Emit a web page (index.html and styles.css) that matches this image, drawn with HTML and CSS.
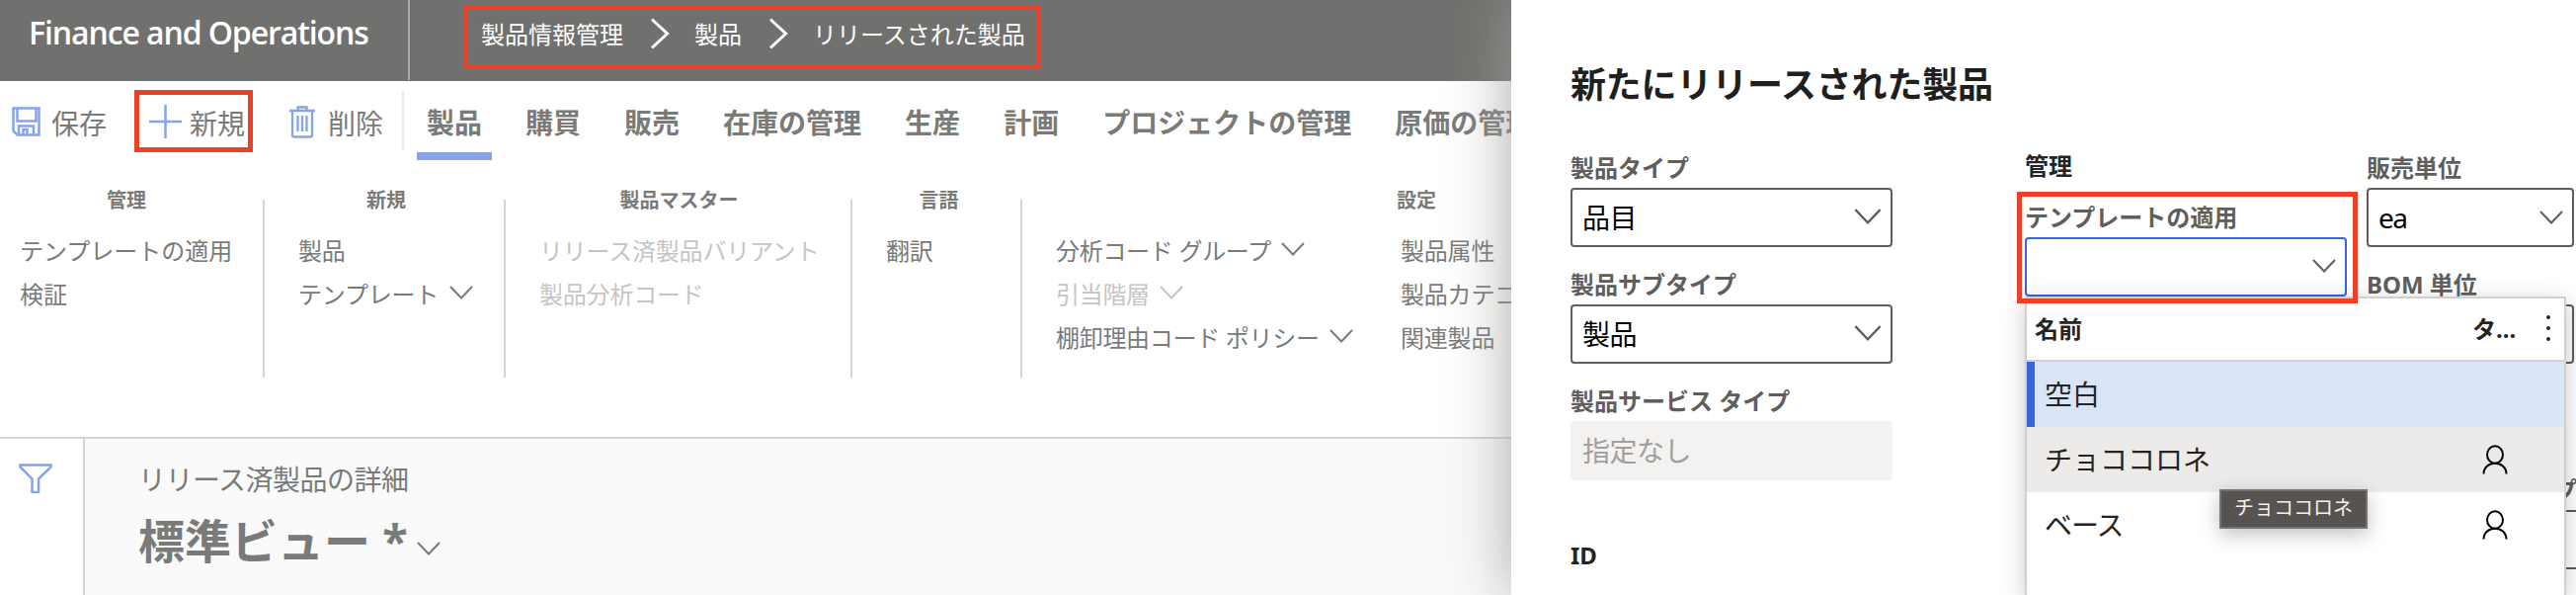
FILE: index.html
```html
<!DOCTYPE html>
<html lang="ja">
<head>
  <meta charset="UTF-8">
  <meta name="viewport" content="width=device-width, initial-scale=1.0">
  <title>Finance and Operations - リリースされた製品</title>
  <link rel="stylesheet" href="styles.css">
</head>
<body>
  <!-- 共通アイコン -->
  <svg class="sprite" aria-hidden="true">
    <symbol id="chevron-down" viewBox="0 0 24 14">
      <path d="M1 1l11 11.5L23 1" fill="none" stroke="currentColor" stroke-width="2"/>
    </symbol>
    <symbol id="chevron-right" viewBox="0 0 20 32">
      <path d="M2 1.5L17.5 16 2 30.500" fill="none" stroke="currentColor" stroke-width="3"/>
    </symbol>
    <symbol id="person" viewBox="0 0 26 30">
      <ellipse cx="13" cy="10" rx="8" ry="8.700" fill="none" stroke="currentColor" stroke-width="2"/>
      <path d="M1.500 29.500C1.500 23 6.500 18.700 13 18.700S24.500 23 24.500 29.500" fill="none" stroke="currentColor" stroke-width="2"/>
    </symbol>
  </svg>

  <main class="page">
    <header class="topbar">
      <div class="brand"><span class="brand-name">Finance and Operations</span></div>
      <nav class="breadcrumb marked">
        <span>製品情報管理</span>
        <svg class="crumb-arrow"><use href="#chevron-right"/></svg>
        <span>製品</span>
        <svg class="crumb-arrow"><use href="#chevron-right"/></svg>
        <span>リリースされた製品</span>
      </nav>
    </header>

    <div class="toolbar">
      <button class="tool save">
        <svg width="29" height="30" viewBox="0 0 29 30" fill="none" stroke="currentColor" stroke-width="2.500">
          <path d="M1.500 1.500h26v27h-22l-4-4z"/>
          <path d="M5.500 1.500v13h19v-13M7 28v-8.500h15V28M11.500 28v-5h4v5"/>
        </svg>
        <span>保存</span>
      </button>
      <button class="tool new marked">
        <svg width="33" height="34" viewBox="0 0 33 34" fill="none" stroke="currentColor" stroke-width="2.500">
          <path d="M16.500 0v34M0 17h33"/>
        </svg>
        <span>新規</span>
      </button>
      <button class="tool delete">
        <svg width="26" height="33" viewBox="0 0 26 33" fill="none" stroke="currentColor" stroke-width="2.300">
          <path d="M0 5h26M8.500 5V1.500h9V5M3 5v24.500q0 2 2 2h16q2 0 2-2V5M8.500 10v16M13 10v16M17.500 10v16"/>
        </svg>
        <span>削除</span>
      </button>
      <div class="tabs">
        <span class="tab active">製品</span>
        <span class="tab">購買</span>
        <span class="tab">販売</span>
        <span class="tab">在庫の管理</span>
        <span class="tab">生産</span>
        <span class="tab">計画</span>
        <span class="tab">プロジェクトの管理</span>
        <span class="tab">原価の管理</span>
      </div>
    </div>

    <div class="ribbon">
      <section class="group g-manage">
        <h3>管理</h3>
        <a>テンプレートの適用</a>
        <a>検証</a>
      </section>
      <section class="group g-new">
        <h3>新規</h3>
        <a>製品</a>
        <a>テンプレート<svg class="chev"><use href="#chevron-down"/></svg></a>
      </section>
      <section class="group g-master">
        <h3>製品マスター</h3>
        <a class="disabled">リリース済製品バリアント</a>
        <a class="disabled">製品分析コード</a>
      </section>
      <section class="group g-lang">
        <h3>言語</h3>
        <a>翻訳</a>
      </section>
      <section class="group g-setup">
        <h3>設定</h3>
        <div class="columns">
          <div class="column">
            <a>分析コード グループ<svg class="chev"><use href="#chevron-down"/></svg></a>
            <a class="disabled">引当階層<svg class="chev"><use href="#chevron-down"/></svg></a>
            <a>棚卸理由コード ポリシー<svg class="chev"><use href="#chevron-down"/></svg></a>
          </div>
          <div class="column">
            <a>製品属性</a>
            <a>製品カテゴリ</a>
            <a>関連製品</a>
          </div>
        </div>
      </section>
    </div>

    <div class="content">
      <aside class="rail">
        <svg width="34" height="30" viewBox="0 0 34 30" fill="none" stroke="currentColor" stroke-width="2.500">
          <path d="M1.500 1.500h31v2L20 15.500V29h-6.500V15.500L1.500 3.500z"/>
        </svg>
      </aside>
      <div class="record">
        <div class="record-caption">リリース済製品の詳細</div>
        <div class="record-view"><span>標準ビュー *</span><svg class="chev"><use href="#chevron-down"/></svg></div>
      </div>
    </div>
  </main>

  <aside class="panel">
    <h1>新たにリリースされた製品</h1>
    <div class="form">
      <div class="form-col col-type">
        <div class="field">
          <label>製品タイプ</label>
          <div class="input">品目<svg class="chev big"><use href="#chevron-down"/></svg></div>
        </div>
        <div class="field">
          <label>製品サブタイプ</label>
          <div class="input">製品<svg class="chev big"><use href="#chevron-down"/></svg></div>
        </div>
        <div class="field">
          <label>製品サービス タイプ</label>
          <div class="input readonly">指定なし</div>
        </div>
        <h2 class="id-title">ID</h2>
      </div>

      <div class="form-col col-manage">
        <h2>管理</h2>
        <div class="field template marked">
          <label>テンプレートの適用</label>
          <div class="input focused"><svg class="chev"><use href="#chevron-down"/></svg></div>
        </div>

        <div class="lookup">
          <div class="lookup-head">
            <span class="name">名前</span>
            <span class="type">タ...</span>
            <span class="more"><i></i><i></i><i></i></span>
          </div>
          <div class="lookup-row selected"><span>空白</span></div>
          <div class="lookup-row hover">
            <span>チョココロネ</span>
            <svg class="person"><use href="#person"/></svg>
            <div class="tooltip">チョココロネ</div>
          </div>
          <div class="lookup-row">
            <span class="tight">ベース</span>
            <svg class="person"><use href="#person"/></svg>
          </div>
        </div>
      </div>

      <div class="form-col col-unit">
        <div class="field">
          <label>販売単位</label>
          <div class="input latin">ea<svg class="chev"><use href="#chevron-down"/></svg></div>
        </div>
        <div class="field">
          <label>BOM 単位</label>
          <div class="input"></div>
        </div>
        <div class="field wide">
          <label>プ</label>
          <div class="input"></div>
        </div>
      </div>
    </div>
  </aside>
</body>
</html>
```

FILE: styles.css
```css
:root {
  --topbar: #70706e;
  --text-dim: #7a7a78;
  --text-disabled: #c6c5c3;
  --text-label: #605e5c;
  --text-strong: #252423;
  --accent: #3865db;
  --accent-dim: #86a3ec;
  --line: #d4d4d4;
  --mark: #eb4126;
}

*,
*::before,
*::after {
  box-sizing: border-box;
  margin: 0;
  padding: 0;
}

body {
  width: 2608px;
  height: 602px;
  display: flex;
  overflow: hidden;
  font-family: "Noto Sans", "Noto Sans CJK JP", sans-serif;
  background: #fff;
}

.sprite {
  position: absolute;
  width: 0;
  height: 0;
}

.chev {
  width: 24px;
  height: 14px;
  flex: none;
}

.chev.big {
  width: 28px;
  height: 16px;
}

/* 赤枠の注釈 */
.marked {
  position: relative;
}

.marked::after {
  content: "";
  position: absolute;
  border: 5px solid var(--mark);
  pointer-events: none;
  z-index: 5;
}

/* 左側のページ */
.page {
  width: 1530px;
  height: 602px;
  flex: none;
  display: flex;
  flex-direction: column;
  overflow: hidden;
  color: var(--text-dim);
  white-space: nowrap;
}

.topbar {
  height: 82px;
  flex: none;
  display: flex;
  align-items: flex-start;
  background: var(--topbar);
  color: #fff;
}

.brand {
  width: 415px;
  height: 81px;
  padding-left: 29px;
  border-right: 2px solid #a9a9a8;
  font-family: "Open Sans", "Noto Sans", sans-serif;
  font-size: 32px;
  font-weight: 600;
  line-height: 66px;
  letter-spacing: -1.1px;
}

.breadcrumb {
  height: 70px;
  margin-left: 72px;
  display: flex;
  align-items: center;
  font-size: 24px;
}

.breadcrumb span {
  margin-top: -3px;
}

.breadcrumb::after {
  left: -18px;
  top: 5px;
  width: 585px;
  height: 65px;
}

.crumb-arrow {
  width: 20px;
  height: 32px;
  margin: -2px 25px 0 27px;
}

.toolbar {
  height: 98px;
  flex: none;
  display: flex;
  align-items: flex-start;
}

.tool {
  height: 84px;
  display: flex;
  align-items: center;
  border: none;
  background: none;
  color: inherit;
  font-family: inherit;
  font-size: 28px;
}

.tool svg {
  margin-top: -2px;
  color: var(--accent-dim);
}

.save {
  margin-left: 12px;
  gap: 11px;
}

.new {
  margin-left: 43px;
  gap: 8px;
}

.new::after {
  left: -15px;
  top: 9px;
  width: 120px;
  height: 63px;
}

.delete {
  margin-left: 45px;
  gap: 13px;
}

.tabs {
  height: 60px;
  margin: 10px 0 0 19px;
  padding-left: 23px;
  display: flex;
  gap: 44px;
  border-left: 2px solid #eaeaea;
  font-size: 28px;
  font-weight: 700;
  line-height: 64px;
}

.tab.active {
  position: relative;
  height: 72px;
}

.tab.active::after {
  content: "";
  position: absolute;
  left: -10px;
  bottom: 2px;
  width: 76px;
  height: 8px;
  background: var(--accent-dim);
}

.ribbon {
  height: 262px;
  flex: none;
  display: flex;
}

.group {
  height: 180px;
  margin-top: 22px;
  flex: none;
  border-right: 2px solid var(--line);
}

.group h3 {
  height: 44px;
  margin-top: -21px;
  font-size: 20px;
  line-height: 44px;
  text-align: center;
}

.group a {
  height: 44px;
  display: flex;
  align-items: center;
  font-size: 24px;
  letter-spacing: -0.2px;
}

.group h3 + a,
.columns {
  margin-top: 5px;
}

.group .chev {
  margin-left: 11px;
}

.group .disabled {
  color: var(--text-disabled);
}

.g-manage { width: 268px; padding: 0 10px 0 20px; }
.g-new { width: 244px; padding: 0 30px 0 34px; }
.g-master { width: 351px; padding: 0 32px 0 34px; }
.g-lang { width: 172px; padding: 0 29px 0 34px; }
.g-setup { width: 798px; padding-left: 34px; border-right: none; }

.g-manage a {
  letter-spacing: 0;
}

.g-manage h3 {
  margin-left: -20px;
}

.g-setup h3 {
  margin-left: -34px;
}

.columns {
  display: flex;
}

.column:first-child {
  width: 349px;
}

.column:first-child a {
  letter-spacing: -0.3px;
}

.column:first-child .chev {
  margin-left: 10px;
}

.content {
  flex: 1;
  display: flex;
  border-top: 2px solid var(--line);
}

.rail {
  width: 86px;
  padding: 25px 0 0 19px;
  border-right: 2px solid var(--line);
  color: var(--accent-dim);
}

.record {
  flex: 1;
  padding-left: 54px;
  background: #fafafa;
}

.record-caption {
  padding-top: 20px;
  font-size: 28px;
  line-height: 42px;
  letter-spacing: -0.5px;
}

.record-view {
  display: flex;
  font-size: 47px;
  font-weight: 700;
  line-height: 82px;
}

.record-view .chev {
  margin: 42px 0 0 9px;
}

/* 右側のダイアログ */
.panel {
  position: relative;
  width: 1078px;
  flex: none;
  padding-left: 60px;
  background: #fff;
  box-shadow: 0 0 60px rgba(160, 158, 154, 0.9);
  white-space: nowrap;
}

.panel h1 {
  height: 60px;
  margin-top: 56px;
  font-size: 36px;
  line-height: 60px;
  letter-spacing: -0.2px;
  color: #201f1e;
}

.form {
  margin-top: 35px;
  display: flex;
  align-items: flex-start;
}

.form-col {
  flex: none;
}

.col-type {
  width: 460px;
}

.col-manage {
  position: relative;
  width: 346px;
}

.field {
  height: 118px;
}

.field label {
  height: 39px;
  display: block;
  font-size: 24px;
  font-weight: 700;
  line-height: 38px;
  color: var(--text-label);
}

.input {
  width: 326px;
  height: 60px;
  padding: 0 9px 2px 10px;
  display: flex;
  align-items: center;
  border: 2px solid var(--text-label);
  border-radius: 4px;
  background: #fff;
  color: #000;
  font-size: 28px;
  letter-spacing: -0.5px;
}

.input .chev {
  margin-left: auto;
  color: var(--text-label);
}

.input.readonly {
  border-color: #f3f2f1;
  background: #f3f2f1;
  color: #a19f9d;
}

.input.focused {
  border-color: var(--accent);
}

.input.latin {
  padding-bottom: 0;
  letter-spacing: -1.5px;
}

.form h2 {
  font-size: 24px;
  line-height: 34px;
  color: var(--text-strong);
}

.id-title {
  margin-top: 40px;
}

.template {
  height: 99px;
  margin-top: 16px;
}

.template::after {
  left: -8px;
  top: -7px;
  width: 345px;
  height: 113px;
}

.col-unit .input {
  width: 210px;
}

.col-unit .wide {
  height: 100px;
  margin-top: 90px;
}

.col-unit .wide .input {
  width: 240px;
}

.col-unit .wide label {
  width: 213px;
  text-align: right;
}

/* ルックアップ */
.lookup {
  position: absolute;
  left: 0;
  top: 149px;
  width: 548px;
  height: 302px;
  z-index: 2;
  border: 2px solid #d2d0ce;
  border-bottom: none;
  background: #fff;
  color: var(--text-strong);
  box-shadow: 0 6px 22px rgba(0, 0, 0, 0.22);
}

.lookup-head {
  height: 64px;
  padding: 0 14px 3px 8px;
  display: flex;
  align-items: center;
  border-bottom: 2px solid #d2d0ce;
  font-size: 24px;
  font-weight: 700;
}

.lookup-head .type {
  width: 75px;
  margin-left: auto;
}

.more {
  display: flex;
  flex-direction: column;
  gap: 7px;
}

.more i {
  width: 4px;
  height: 4px;
  border-radius: 50%;
  background: var(--text-strong);
}

.lookup-row {
  position: relative;
  height: 66px;
  padding: 0 57px 0 18px;
  display: flex;
  align-items: center;
  justify-content: space-between;
  font-size: 28px;
}

.lookup-row > span {
  margin-top: -3px;
}

.lookup-row .tight {
  letter-spacing: -1px;
}

.lookup-row.selected {
  padding-left: 10px;
  border-left: 8px solid var(--accent);
  background: #dae4f7;
}

.lookup-row.hover {
  background: #edebe9;
}

.person {
  width: 26px;
  height: 30px;
  color: #000;
}

.tooltip {
  position: absolute;
  left: 195px;
  top: 63px;
  width: 150px;
  height: 40px;
  z-index: 3;
  border: 2px solid #767270;
  background: #575350;
  color: #f3f2f1;
  font-size: 20px;
  line-height: 34px;
  text-align: center;
  box-shadow: 0 6px 20px rgba(0, 0, 0, 0.25);
}
```
